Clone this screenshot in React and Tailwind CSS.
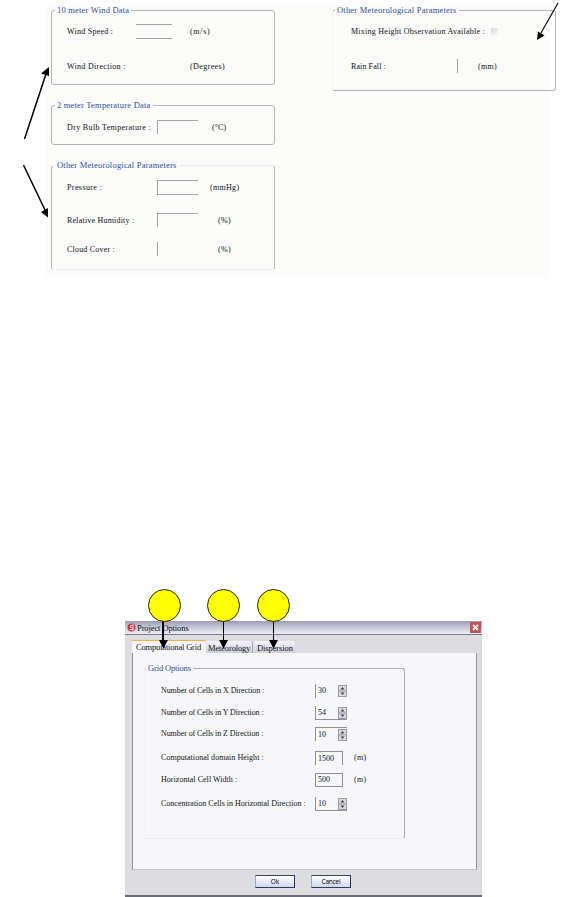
import React from "react";

function Group({ title, className = "", legend = "-ml-[12px] tracking-[0.2px]", children }) {
  return (
    <fieldset className={`min-w-0 rounded-[3px] border pl-[15px] ${className}`}>
      <legend className={`h-[10px] px-[2px] text-[8.5px] leading-[10px] text-[#2a4f9c] ${legend}`}>{title}</legend>
      {children}
    </fieldset>
  );
}

function Row({ label, className = "", labelClass, box, unit, unitClass = "" }) {
  return (
    <div className={`flex h-[16px] items-center ${className}`}>
      <span className={`shrink-0 pt-px ${labelClass}`}>{label}</span>
      <span className={`shrink-0 border-[#a2a2a2] ${box}`} />
      <span className={`pt-px ${unitClass}`}>{unit}</span>
    </div>
  );
}

function Spinner({ value, edges }) {
  return (
    <span className={`flex h-[14px] w-[32px] shrink-0 items-center justify-between border-[#8e9098] pl-[2px] ${edges}`}>
      <span>{value}</span>
      <span className="flex h-[12px] w-[9px] items-center justify-center border-x border-[#9a9aa4] bg-[#d9d9df]">
        <svg width="7" height="12" viewBox="0 0 7 12">
          <path d="M0 6h7M0 .5h7M0 11.500h7" stroke="#9b9ba3" />
          <path d="M1.500 4.500L3.500 2L5.500 4.500zM1.500 7.500h4L3.500 10z" fill="#44444c" />
        </svg>
      </span>
    </span>
  );
}

function GridRow({ label, value, className = "", spacing, unit, edges }) {
  return (
    <div className={`flex h-[16px] items-center ${className}`}>
      <span className={`w-[154px] shrink-0 ${spacing}`}>{label}</span>
      {unit ? (
        <span className={`flex h-[14px] w-[28px] items-center border-[#8e9098] pl-[2px] ${edges}`}>{value}</span>
      ) : (
        <Spinner value={value} edges={edges} />
      )}
      {unit && <span className="ml-[11px] tracking-[0.3px]">{unit}</span>}
    </div>
  );
}

function Annotations() {
  return (
    <svg className="pointer-events-none absolute left-0 top-0" width="564" height="897" viewBox="0 0 564 897">
      <g stroke="#000" strokeWidth="1.5">
        <path d="M24.500 139L46 74M23.500 165L45 210" />
        <path d="M558 3L541 33" strokeWidth="1.100" />
        <path d="M163 621V642" strokeWidth="2" />
        <path d="M223.500 621V642M273.500 621V642" strokeWidth="1" />
      </g>
      <path d="M49 67L49 76L41 73.500zM48 217.500L41 212L48 208zM537 40L538 31.500L544.500 35.500z" />
      <path d="M159 640h9l-4.500 8.500zM219 640h9l-4.500 8.500zM269 640h9l-4.500 8.500z" />
      <g fill="#ff0" stroke="#222200" strokeWidth="1">
        <circle cx="164.500" cy="605.500" r="16" />
        <circle cx="223.500" cy="605.500" r="16" />
        <circle cx="273.500" cy="605.500" r="16" />
      </g>
    </svg>
  );
}

export default function App() {
  return (
    <div className="relative h-[897px] w-[564px] overflow-hidden bg-white font-['Liberation_Serif',serif] text-[8px] leading-[10px] whitespace-nowrap text-[#0e1216]">
      <section className="ml-[46px] flex h-[276px] w-[504px] pt-[5px] pl-[5px] bg-linear-to-b from-white from-[5px] to-[#fbfbfa] to-[5px]">
        <div className="w-[224px] shrink-0">
          <Group title="10 meter Wind Data" className="h-[80px] border-[#b3b3b3]">
            <Row label="Wind Speed :" className="mt-[8px]" labelClass="w-[69px] tracking-[0.25px]" box="h-[15px] w-[36px] border-y" unit="(m/s)" unitClass="ml-[18px] tracking-[0.7px]" />
            <Row label="Wind Direction :" className="mt-[19px]" labelClass="w-[69px] tracking-[0.3px]" box="h-[15px] w-[36px]" unit="(Degrees)" unitClass="ml-[18px] tracking-[0.4px]" />
          </Group>
          <Group title="2 meter Temperature Data" className="mt-[15px] h-[45px] border-[#b3b3b3]">
            <Row label="Dry Bulb Temperature :" className="mt-[9px]" labelClass="w-[90px] tracking-[0.35px]" box="h-[14px] w-[41px] border-t border-l" unit="(°C)" unitClass="ml-[14px] tracking-[0.1px]" />
          </Group>
          <Group title="Other Meteorological Parameters" className="mt-[15px] h-[110px] border-x-[#b3b3b3] border-y-[#eeeeee]">
            <Row label="Pressure :" className="mt-[9px]" labelClass="w-[90px] tracking-[0.4px]" box="h-[15px] w-[41px] border-y border-l" unit="(mmHg)" unitClass="ml-[12px] tracking-[0.3px]" />
            <Row label="Relative Humidity :" className="mt-[17px]" labelClass="w-[90px] tracking-[0.2px]" box="h-[14px] w-[41px] border-t border-l" unit="(%)" unitClass="ml-[20px] tracking-[0.3px]" />
            <Row label="Cloud Cover :" className="mt-[13px]" labelClass="w-[90px] tracking-[0.2px]" box="h-[14px] w-[41px] border-l" unit="(%)" unitClass="ml-[20px] tracking-[0.3px]" />
          </Group>
        </div>
        <div className="ml-[57px] w-[224px] shrink-0">
          <Group title="Other Meteorological Parameters" legend="-ml-[13px] tracking-[0.2px]" className="h-[86px] border-[#b3b3b3] border-l-[#f1f1f1]">
            <Row label="Mixing Height Observation Available :" className="mt-[8px] pl-[3px]" labelClass="w-[140px] tracking-[0.25px]" box="h-[7px] w-[7px] bg-linear-to-br from-[#cfdcda] to-[#fbfbfa]" />
            <Row label="Rain Fall :" className="mt-[19px] pl-[3px]" labelClass="w-[71px] tracking-[0.1px]" box="h-[14px] w-[36px] border-r" unit="(mm)" unitClass="ml-[20px] tracking-[0.3px]" />
          </Group>
        </div>
      </section>

      <section className="mt-[345px] ml-[125px] flex h-[276px] w-[357px] flex-col border-b-2 border-[#6c6b78] bg-[#dcdce1]">
        <header className="flex h-[14px] items-center justify-between border-b border-[#777787] bg-linear-to-b from-[#9d9db2] via-[#c9cad8] to-[#f0f0f6] pr-[1px] pl-[2px]">
          <span className="flex items-center gap-[1px] text-[8.5px] tracking-[-0.1px]">
            <svg width="9" height="9" viewBox="0 0 9 9">
              <circle cx="4.500" cy="4.500" r="4" fill="#cf3547" />
              <path d="M6 2.500H3.500V4.500H6V6.500H2.500M6 1v7" fill="none" stroke="#ffe3e5" strokeWidth=".8" />
            </svg>
            Project Options
          </span>
          <svg width="11" height="11" viewBox="0 0 11 11">
            <path d="M0 0h11v11H0z" fill="#c4505c" />
            <path d="M3 3l5 5M8 3L3 8" stroke="#fff3dc" strokeWidth="1.800" />
          </svg>
        </header>
        <nav className="mt-[5px] ml-[7px] flex h-[13px] items-end text-[8.5px]">
          <span className="h-[13px] w-[74px] shrink-0 rounded-t-[2px] border-t border-[#f1b04a] bg-[#f7f7fa] pl-[4px] leading-[12px] tracking-[-0.18px]">Computational Grid</span>
          <span className="h-[12px] w-[47px] shrink-0 rounded-t-[2px] border-r border-[#a5a5af] bg-linear-to-b from-[#f4f4f8] to-[#cfcfd9] pl-[2px] leading-[15px] tracking-[-0.15px]">Meteorology</span>
          <span className="ml-px h-[12px] w-[41px] shrink-0 rounded-t-[2px] bg-linear-to-b from-[#f4f4f8] to-[#cfcfd9] pl-[3px] leading-[15px] tracking-[-0.1px]">Dispersion</span>
        </nav>
        <div className="ml-[7px] h-[217px] w-[345px] border-x border-b border-x-[#92929c] border-b-[#c3c3cc] bg-[#f7f7fa] pt-[10px] pl-[11px]">
          <Group title="Grid Options" legend="-ml-[14px] tracking-[-0.15px]" className="h-[176px] w-[261px] border-t-[#a9abb0] border-r-[#a9abb0] border-b-[#ececf1] border-l-[#f2f2f6]">
            <div className="pl-px">
              <GridRow label="Number of Cells in X Direction :" value="30" spacing="tracking-[-0.08px]" className="mt-[10px]" edges="border-l" />
              <GridRow label="Number of Cells in Y Direction :" value="54" spacing="tracking-[-0.08px]" className="mt-[6px]" edges="border-l border-b" />
              <GridRow label="Number of Cells in Z Direction :" value="10" spacing="tracking-[-0.08px]" className="mt-[5px]" edges="border-l border-t" />
              <GridRow label="Computational domain Height :" value="1500" unit="(m)" spacing="tracking-[0.04px]" className="mt-[8px]" edges="border-x border-t" />
              <GridRow label="Horizontal Cell Width :" value="500" unit="(m)" spacing="tracking-[0.04px]" className="mt-[6px]" edges="border" />
              <GridRow label="Concentration Cells in Horizontal Direction :" value="10" spacing="tracking-[0px]" className="mt-[8px]" edges="border-l border-b" />
            </div>
          </Group>
        </div>
        <footer className="mt-[5px] flex gap-[16px] pl-[130px] font-['Open_Sans',sans-serif] text-[6.5px] text-black">
          <button className="h-[13px] w-[40px] border border-r-[#242b50] border-b-[#343b60] border-t-[#394264] border-l-[#9da6cc] bg-linear-to-b from-white to-[#d3d6ec] leading-[11px]">Ok</button>
          <button className="h-[13px] w-[40px] border border-r-[#242b50] border-b-[#343b60] border-t-[#394264] border-l-[#9da6cc] bg-linear-to-b from-white to-[#d3d6ec] leading-[11px] tracking-[-0.2px]">Cancel</button>
        </footer>
      </section>
      <Annotations />
    </div>
  );
}
